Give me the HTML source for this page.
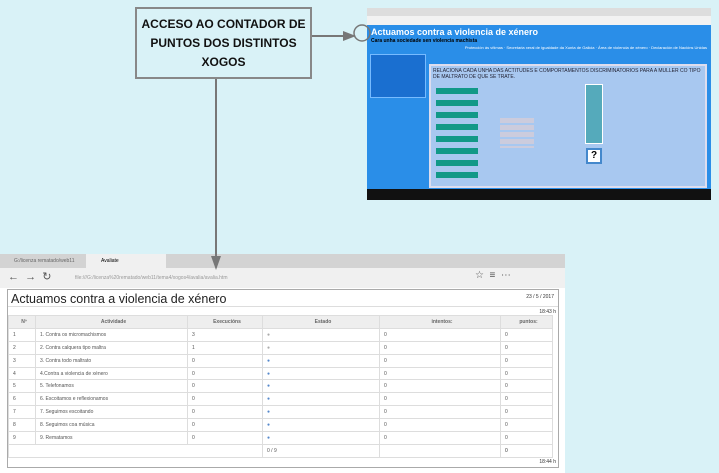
<!DOCTYPE html>
<html><head><meta charset="utf-8"><style>
*{margin:0;padding:0;box-sizing:border-box}
body{width:719px;height:473px;background:#d9f2f7;position:relative;overflow:hidden;font-family:"Liberation Sans",sans-serif}
.abs{position:absolute}
.callout{left:135px;top:7px;width:177px;height:72px;border:2px solid #888;background:#d9f2f7;font-weight:bold;font-size:12px;text-align:center;line-height:19px;padding-top:6px;color:#111}
.shot{left:367px;top:8px;width:344px;height:192px;background:#1e90ff;overflow:hidden}
.br{left:0;top:254px;width:565px;height:219px;background:#fff}
table{border-collapse:collapse;font-size:5px;color:#555}
td,th{border:1px solid #ddd;height:12.9px;padding-left:4px;text-align:left}
th{background:#eee;font-weight:bold;text-align:center;color:#666}
</style></head><body>
<div class="abs callout">ACCESO AO CONTADOR DE<br>PUNTOS DOS DISTINTOS<br>XOGOS</div>
<div class="abs shot">
 <div class="abs" style="left:0;top:0;width:344px;height:8px;background:#ddd"></div>
 <div class="abs" style="left:0;top:8px;width:344px;height:9px;background:#f2f2f2"></div>
 <div class="abs" style="left:0;top:17px;width:344px;height:164px;background:#2a8ee8"></div>
 <div class="abs" style="left:4px;top:19px;color:#fff;font-weight:bold;font-size:9px">Actuamos contra a violencia de xénero</div>
 <div class="abs" style="left:4px;top:30px;color:#000;font-weight:bold;font-size:5px">Cara unha sociedade sen violencia machista</div>
 <div class="abs" style="left:60px;top:37px;color:#fff;font-size:4px;width:280px;text-align:right">Protección ás vítimas · Secretaria xeral de igualdade da Xunta de Galicia · Área de violencia de xénero · Declaración de Nacións Unidas</div>
 <div class="abs" style="left:3px;top:46px;width:56px;height:44px;background:#1a6fd0;border:1px solid #7bf"></div>
 <div class="abs" style="left:62px;top:56px;width:278px;height:124px;background:#a8c8f0;border:2px solid #dde"></div>
 <div class="abs" style="left:66px;top:60px;width:270px;font-size:5px;color:#223">RELACIONA CADA UNHA DAS ACTITUDES E COMPORTAMENTOS DISCRIMINATORIOS PARA A MULLER CO TIPO DE MALTRATO DE QUE SE TRATE.</div>
 <div class="abs" style="left:69px;top:80px;width:42px;height:96px;background:repeating-linear-gradient(#119988 0 6px,#a8c8f0 6px 12px)"></div>
 <div class="abs" style="left:133px;top:110px;width:34px;height:30px;background:repeating-linear-gradient(#ccd 0 5px,#a8c8f0 5px 7px)"></div>
 <div class="abs" style="left:218px;top:76px;width:18px;height:60px;background:#5ab;border:1px solid #fff"></div>
 <div class="abs" style="left:219px;top:140px;width:16px;height:16px;background:#fff;border:2px solid #48c;font-size:10px;font-weight:bold;text-align:center">?</div>
 <div class="abs" style="left:0;top:181px;width:344px;height:11px;background:#111"></div>
</div>
<div class="abs br">
 <div class="abs" style="left:0;top:0;width:565px;height:14px;background:#d3d3d3"></div>
 <div class="abs" style="left:86px;top:0;width:80px;height:14px;background:#f0f0f0;font-size:5px;padding:4px 0 0 15px">Avaliate</div>
 <div class="abs" style="left:14px;top:4px;font-size:5px;color:#666">G:/licenza rematado/web11</div>
 <div class="abs" style="left:0;top:14px;width:565px;height:20px;background:#f0f0f0"></div>
 <div class="abs" style="left:8px;top:16px;font-size:11px;color:#555">←&nbsp;&nbsp;→&nbsp;&nbsp;↻</div>
 <div class="abs" style="left:75px;top:21px;font-size:5px;color:#999">file:///G:/licenza%20rematado/web11/tema4/xogos4/avalia/avalia.htm</div>
 <div class="abs" style="left:475px;top:16px;font-size:10px;color:#555">☆ &nbsp;≡ &nbsp;⋯</div>
 <div class="abs" style="left:7px;top:35px;width:552px;height:179px;border:1px solid #aaa;background:#fff">
  <div class="abs" style="left:3px;top:2px;font-size:12.5px;color:#222">Actuamos contra a violencia de xénero</div>
  <div class="abs" style="right:4px;top:4px;font-size:5px;color:#333">23 / 5 / 2017</div>
  <div class="abs" style="left:0;top:16px;width:550px;border-top:1px solid #ddd"></div>
  <div class="abs" style="right:2px;top:19px;font-size:5px;color:#333">18:43 h</div>
  <table class="abs" style="left:0;top:25px;width:545px">
   <tr><th style="width:27px">Nº</th><th style="width:152px">Actividade</th><th style="width:75px">Execucións</th><th style="width:117px">Estado</th><th style="width:121px">intentos:</th><th>puntos:</th></tr>
   <tr><td>1</td><td>1. Contra os micromachismos</td><td>3</td><td style="color:#aaa">●</td><td>0</td><td>0</td></tr>
   <tr><td>2</td><td>2. Contra calquera tipo maltra</td><td>1</td><td style="color:#aaa">●</td><td>0</td><td>0</td></tr>
   <tr><td>3</td><td>3. Contra todo maltrato</td><td>0</td><td style="color:#58c">●</td><td>0</td><td>0</td></tr>
   <tr><td>4</td><td>4.Contra a violencia de xénero</td><td>0</td><td style="color:#58c">●</td><td>0</td><td>0</td></tr>
   <tr><td>5</td><td>5. Telefonamos</td><td>0</td><td style="color:#58c">●</td><td>0</td><td>0</td></tr>
   <tr><td>6</td><td>6. Escoitamos e reflexionamos</td><td>0</td><td style="color:#58c">●</td><td>0</td><td>0</td></tr>
   <tr><td>7</td><td>7. Seguimos escoitando</td><td>0</td><td style="color:#58c">●</td><td>0</td><td>0</td></tr>
   <tr><td>8</td><td>8. Seguimos coa música</td><td>0</td><td style="color:#58c">●</td><td>0</td><td>0</td></tr>
   <tr><td>9</td><td>9. Rematamos</td><td>0</td><td style="color:#58c">●</td><td>0</td><td>0</td></tr>
   <tr><td colspan="3"></td><td>0 / 9</td><td></td><td style="color:#333">0</td></tr>
  </table>
  <div class="abs" style="right:2px;top:169px;font-size:5px;color:#333">18:44 h</div>
 </div>
</div>
<svg class="abs" style="left:0;top:0" width="719" height="473">
<line x1="312" y1="36" x2="345" y2="36" stroke="#777" stroke-width="2"/>
<polygon points="343,31 356,36 343,41" fill="#777"/>
<circle cx="362" cy="33" r="8" fill="none" stroke="#777" stroke-width="1.5"/>
<line x1="216" y1="79" x2="216" y2="258" stroke="#777" stroke-width="2"/>
<polygon points="211,256 216,270 221,256" fill="#777"/>
</svg>
</body></html>
